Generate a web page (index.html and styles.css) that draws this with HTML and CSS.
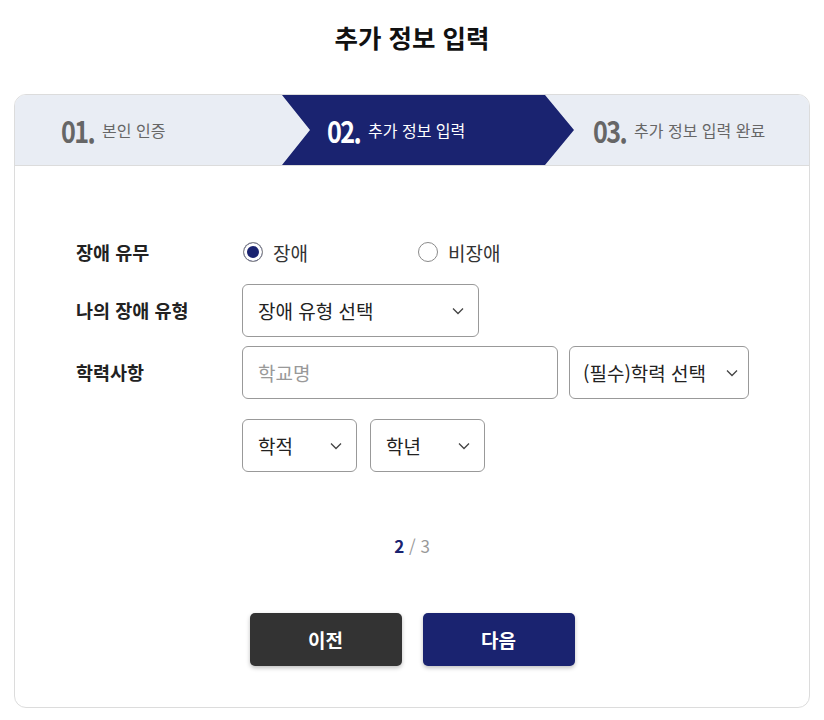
FILE: index.html
```html
<!DOCTYPE html>
<html lang="ko">
<head>
  <meta charset="UTF-8">
  <meta name="viewport" content="width=device-width, initial-scale=1">
  <title>추가 정보 입력</title>
  <link rel="stylesheet" href="styles.css">
</head>
<body>
  <h1 class="page-title">추가 정보 입력</h1>

  <div class="card">
    <ol class="steps">
      <li class="step step-first"><span class="step-num">01.</span><span class="step-name">본인 인증</span></li>
      <li class="step step-active"><span class="step-num">02.</span><span class="step-name">추가 정보 입력</span></li>
      <li class="step step-last"><span class="step-num">03.</span><span class="step-name">추가 정보 입력 완료</span></li>
    </ol>

    <div class="form-body">
      <div class="row row-radio">
        <div class="label">장애 유무</div>
        <div class="field">
          <label class="radio checked"><span class="dot"></span>장애</label>
          <label class="radio"><span class="dot"></span>비장애</label>
        </div>
      </div>

      <div class="row">
        <div class="label">나의 장애 유형</div>
        <div class="field">
          <div class="select w-236">장애 유형 선택
            <svg class="chev" width="12" height="8" viewBox="0 0 12 8"><path d="M1 1.5 6 6.5 11 1.5" fill="none" stroke="#444" stroke-width="1.3"/></svg>
          </div>
        </div>
      </div>

      <div class="row">
        <div class="label">학력사항</div>
        <div class="field-stack">
          <div class="field">
            <div class="input w-316">학교명</div>
            <div class="select w-180">(필수)학력 선택
              <svg class="chev" width="12" height="8" viewBox="0 0 12 8"><path d="M1 1.5 6 6.5 11 1.5" fill="none" stroke="#444" stroke-width="1.3"/></svg>
            </div>
          </div>
          <div class="field">
            <div class="select w-115">학적
              <svg class="chev" width="12" height="8" viewBox="0 0 12 8"><path d="M1 1.5 6 6.5 11 1.5" fill="none" stroke="#444" stroke-width="1.3"/></svg>
            </div>
            <div class="select w-115">학년
              <svg class="chev" width="12" height="8" viewBox="0 0 12 8"><path d="M1 1.5 6 6.5 11 1.5" fill="none" stroke="#444" stroke-width="1.3"/></svg>
            </div>
          </div>
        </div>
      </div>

      <p class="pager"><b>2</b> / 3</p>

      <div class="buttons">
        <button class="btn btn-prev">이전</button>
        <button class="btn btn-next">다음</button>
      </div>
    </div>
  </div>
</body>
</html>
```

FILE: styles.css
```css
body {
  margin: 0;
  background: #fff;
  color: #222;
  font-family: "Noto Sans CJK KR", "Noto Sans", sans-serif;
}
.page-title {
  margin: 0;
  padding-top: 18px;
  height: 76px;
  text-align: center;
  font-size: 25.5px;
  line-height: 38px;
  font-weight: 700;
  color: #111;
}
.card {
  margin: 0 14px;
  border: 1px solid #dcdcdc;
  border-radius: 12px;
  overflow: hidden;
  height: 614px;
  box-sizing: border-box;
}

/* steps */
.steps {
  list-style: none;
  margin: 0;
  padding: 0;
  display: flex;
  height: 70px;
  background: #e9edf4;
  border-bottom: 1px solid #dcdcdc;
}
.step {
  display: flex;
  align-items: center;
  color: #666;
  white-space: nowrap;
}
.step-num {
  font-size: 30px;
  font-weight: 700;
  letter-spacing: -2px;
  transform: scaleX(0.84);
  transform-origin: left center;
  display: inline-block;
  width: 41px;
}
.step-name { font-size: 16px; }
.step-first { width: 267px; padding-left: 46px; box-sizing: border-box; }
.step-active {
  width: 292px;
  padding-left: 45px;
  box-sizing: border-box;
  background: #1a2370;
  color: #fff;
  clip-path: polygon(0 0, 263px 0, 100% 50%, 263px 100%, 0 100%, 28px 50%);
}
.step-last { padding-left: 19px; }

/* form */
.form-body { padding: 66px 0 0 61px; }
.row { display: flex; margin-bottom: 9px; }
.row-radio { margin-bottom: 12px; height: 40px; align-items: center; }
.label {
  width: 166px;
  flex-shrink: 0;
  font-size: 18.5px;
  font-weight: 700;
  line-height: 53px;
  color: #222;
}
.row-radio .label { line-height: 40px; }
.field { display: flex; gap: 11px; }
.field-stack { display: flex; flex-direction: column; gap: 20px; }
.radio {
  display: flex;
  align-items: center;
  width: 175px;
  font-size: 19px;
  color: #333;
}
.radio + .radio { margin-left: -11px; }
.dot {
  width: 20px;
  height: 20px;
  box-sizing: border-box;
  border: 1px solid #8a8a8a;
  border-radius: 50%;
  margin: 0 10px 0 1px;
  background: #fff;
}
.checked .dot {
  background: #1a2370;
  box-shadow: inset 0 0 0 3px #fff;
}
.select, .input {
  height: 53px;
  box-sizing: border-box;
  border: 1px solid #999;
  border-radius: 6px;
  display: flex;
  align-items: center;
  padding: 0 14px 0 15px;
  font-size: 19px;
  color: #222;
}
.input { color: #999; }
.select .chev { margin-left: auto; }
.w-236 { width: 237px; }
.w-316 { width: 316px; }
.w-180 { width: 180px; padding-left: 13px; padding-right: 10px; }
.w-115 { width: 115px; }
.w-115 + .w-115 { margin-left: 2px; }

.pager {
  margin: 62px 0 0 -61px;
  text-align: center;
  font-size: 17px;
  line-height: 24px;
  color: #999;
}
.pager b { color: #1a2370; }
.buttons {
  display: flex;
  justify-content: center;
  gap: 21px;
  margin: 55px 0 0 -61px;
}
.btn {
  width: 152px;
  height: 53px;
  border: none;
  border-radius: 5px;
  color: #fff;
  font-family: inherit;
  font-size: 19px;
  font-weight: 700;
  box-shadow: 0 2px 4px rgba(0,0,0,0.25);
}
.btn-prev { background: #333; }
.btn-next { background: #1a2370; }
```
